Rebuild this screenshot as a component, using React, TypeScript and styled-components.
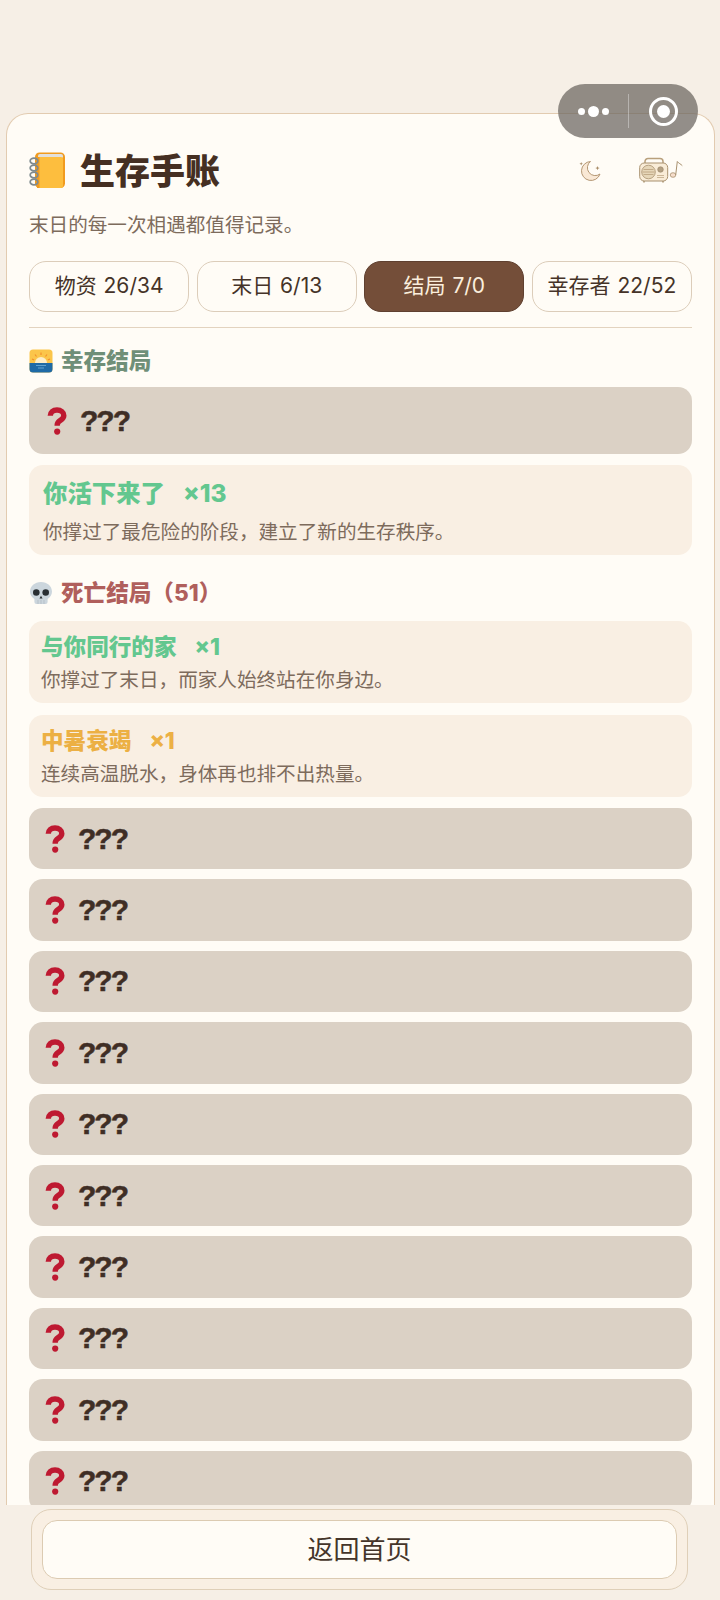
import React from "react";
import styled, { createGlobalStyle } from "styled-components";

const Global = createGlobalStyle`
  html, body { margin: 0; padding: 0; background: #f6efe6; }
  body { font-family: "Inter", "Noto Sans CJK SC", sans-serif; }
`;
const Page = styled.div`
  position: relative;
  width: 720px;
  height: 1600px;
  overflow: hidden;
  display: flex;
  flex-direction: column;
  background: #f6efe6;
`;
const Capsule = styled.div`
  position: absolute;
  left: 558px;
  top: 84px;
  width: 140px;
  height: 54px;
  border-radius: 27px;
  background: rgba(105, 100, 94, 0.72);
  display: flex;
  align-items: center;
`;
const Dots = styled.div`
  width: 70px;
  display: flex;
  justify-content: center;
  align-items: center;
  gap: 3px;
`;
const Dot = styled.i<{ $big?: boolean }>`
  display: block;
  width: ${(p) => (p.$big ? 11 : 7)}px;
  height: ${(p) => (p.$big ? 11 : 7)}px;
  border-radius: 50%;
  background: #fff;
`;
const CapsuleLine = styled.div`
  width: 1px;
  height: 34px;
  background: rgba(255, 255, 255, 0.35);
`;
const Target = styled.div`
  margin-left: 20px;
  width: 29px;
  height: 29px;
  box-sizing: border-box;
  border: 3px solid #fff;
  border-radius: 50%;
  display: flex;
  align-items: center;
  justify-content: center;
  &::after {
    content: "";
    width: 13px;
    height: 13px;
    border-radius: 50%;
    background: #fff;
  }
`;
const Card = styled.main`
  flex: 1;
  min-height: 0;
  overflow: hidden;
  margin: 113px 5px 0 6px;
  padding: 0 22px;
  background: #fffcf6;
  border: 1px solid #e2cbb0;
  border-bottom: none;
  border-radius: 22px 22px 0 0;
`;
const Header = styled.header`
  margin-top: 38px;
  height: 36px;
  display: flex;
  align-items: center;
  justify-content: space-between;
`;
const TitleWrap = styled.div`
  display: flex;
  align-items: center;
  gap: 14px;
`;
const Title = styled.h1`
  margin: 0;
  padding-top: 2px;
  font-size: 35px;
  line-height: 36px;
  font-weight: 900;
  color: #452f22;
`;
const Tools = styled.div`
  display: flex;
  align-items: center;
  gap: 37px;
  padding-right: 9px;
`;
const Sub = styled.p`
  margin: 23px 0 0;
  font-size: 19.6px;
  line-height: 28px;
  color: #7d6b5c;
`;
const Tabs = styled.nav`
  margin-top: 22px;
  display: grid;
  grid-template-columns: repeat(4, 1fr);
  gap: 7.5px;
`;
const Tab = styled.button<{ $active?: boolean }>`
  height: 51px;
  padding: 0 0 5px;
  box-sizing: border-box;
  border-radius: 17px;
  border: 1.5px solid ${(p) => (p.$active ? "#5f4030" : "#dccdba")};
  background: ${(p) => (p.$active ? "#744e39" : "#fffcf6")};
  color: ${(p) => (p.$active ? "#fbeedd" : "#453328")};
  font-family: inherit;
  font-size: 21px;
  word-spacing: 1px;
  white-space: pre;
`;
const Rule = styled.hr`
  margin: 15px 0 0;
  border: none;
  height: 1px;
  background: #e3d3bf;
`;
const Section = styled.h2<{ $color: string; $top: number }>`
  margin: ${(p) => p.$top}px 0 0;
  height: 30px;
  display: flex;
  align-items: center;
  gap: 8px;
  font-size: 22.6px;
  line-height: 30px;
  font-weight: 800;
  color: ${(p) => p.$color};
`;
const List = styled.div<{ $top: number; $gap: number }>`
  margin-top: ${(p) => p.$top}px;
  display: flex;
  flex-direction: column;
  gap: ${(p) => p.$gap}px;
`;
const Locked = styled.div<{ $tall?: boolean }>`
  height: ${(p) => (p.$tall ? 67 : 61.4)}px;
  flex: none;
  box-sizing: border-box;
  padding-left: ${(p) => (p.$tall ? 18 : 16)}px;
  display: flex;
  align-items: center;
  gap: 13px;
  background: #dbd1c5;
  border-radius: 14px;
`;
const Mystery = styled.span`
  font-family: "Liberation Sans", sans-serif;
  font-size: 30px;
  line-height: 32px;
  font-weight: 700;
  letter-spacing: -2px;
  -webkit-text-stroke: 0.5px #3f2e25;
  color: #3f2e25;
`;
const Found = styled.div<{ $large?: boolean }>`
  height: ${(p) => (p.$large ? 90 : 82)}px;
  box-sizing: border-box;
  padding: ${(p) => (p.$large ? "12px 14px" : "10px 12px")};
  background: #f9efe3;
  border-radius: 14px;
`;
const FoundTitle = styled.div<{ $color: string; $large?: boolean }>`
  display: flex;
  gap: 18px;
  font-size: ${(p) => (p.$large ? 24.4 : 22.6)}px;
  line-height: 32px;
  font-weight: 800;
  color: ${(p) => p.$color};
`;
const FoundDesc = styled.div<{ $large?: boolean }>`
  margin-top: ${(p) => (p.$large ? 10 : 4)}px;
  font-size: 19.6px;
  line-height: 26px;
  color: #7d6b5c;
`;
const Footer = styled.footer`
  height: 95px;
  flex: none;
  box-sizing: border-box;
  padding: 4px 32px 10px 31px;
  background: #f6efe6;
`;
const FooterFrame = styled.div`
  height: 81px;
  box-sizing: border-box;
  padding: 10px;
  background: #f9efe3;
  border: 1px solid #dfcfb8;
  border-radius: 20px;
`;
const HomeButton = styled.button`
  width: 100%;
  height: 59px;
  padding: 0 0 4px;
  background: #fffcf6;
  border: 1px solid #dccbb2;
  border-radius: 15px;
  color: #45352a;
  font-family: inherit;
  font-size: 26px;
`;
const Glyph = styled.svg`
  display: block;
  flex: none;
`;

const BookIcon = () => (
  <Glyph width="37" height="37" viewBox="0 0 37 37">
    <rect x="6" y="0.5" width="30" height="35.500" rx="4.500" fill="#f19b1f" />
    <rect x="9" y="2" width="25" height="4.500" rx="2" fill="#e2e0da" />
    <rect x="8" y="5" width="26" height="31" rx="2" fill="#fdbe3e" />
    <rect x="8" y="5" width="2.500" height="31" fill="#f19b1f" />
    {[9, 16, 23, 30].map((y) => (
      <ellipse key={y} cx="5" cy={y} rx="3.800" ry="2.800" fill="none" stroke="#7f8a8f" strokeWidth="1.800" />
    ))}
  </Glyph>
);
const SunIcon = () => (
  <Glyph width="24" height="24" viewBox="0 0 24 24">
    <rect x="0.5" y="0.5" width="23" height="23" rx="3.5" fill="#fbc54a" />
    <path d="M6 14a6 6 0 0 1 12 0z" fill="#fdeec8" />
    <g stroke="#f28d2a" strokeWidth="1.1">
      <path d="M12 3.5v2.5M6 5.5l1.5 2M18 5.5l-1.5 2M3 10l2.2 1M21 10l-2.2 1" />
    </g>
    <path d="M0.5 14h23v6a3.5 3.5 0 0 1-3.5 3.5H4A3.5 3.5 0 0 1 .5 20z" fill="#1e6aa6" />
    <path d="M7 16.5h10M9 19h6" stroke="#5fa1d0" strokeWidth="1" />
  </Glyph>
);
const SkullIcon = () => (
  <Glyph width="24" height="24" viewBox="0 0 24 24">
    <path d="M12 1C5.6 1 1 5.3 1 10.6c0 3.3 1.7 5.8 4.4 7.3V21a2 2 0 0 0 2 2h9.2a2 2 0 0 0 2-2v-3.1c2.7-1.5 4.4-4 4.4-7.3C23 5.3 18.400 1 12 1z" fill="#ccd6dd" />
    <circle cx="7.300" cy="11.500" r="3.300" fill="#292f33" />
    <circle cx="16.700" cy="11.500" r="3.300" fill="#292f33" />
    <path d="M12 14.800l1.500 2.700h-3z" fill="#292f33" />
    <path d="M9 19v4M12 19v4M15 19v4" stroke="#aeb8bf" strokeWidth="0.7" />
  </Glyph>
);
const QuestionIcon = () => (
  <Glyph width="20" height="28" viewBox="0 0 20 28">
    <path d="M3.300 8.800C3.300 5 6 3 10 3s6.800 2.200 6.800 5.400c0 2.600-1.600 3.700-3.300 4.900-1.900 1.300-3.300 2.300-3.300 4.700v.8" fill="none" stroke="#be1931" strokeWidth="5.400" strokeLinecap="butt" />
    <circle cx="10.200" cy="24.600" r="3.100" fill="#be1931" />
  </Glyph>
);
const MoonIcon = () => (
  <Glyph width="23" height="23" viewBox="0 0 23 23">
    <path d="M11.500 2.500A9.500 9.500 0 1 0 21 15 7.500 7.500 0 0 1 11.500 2.500z" fill="#f9e8d5" stroke="#b39673" strokeWidth="1" />
    <path d="M2.200 3l.5 1.300 1.300.5-1.300.5-.5 1.300-.5-1.300L.4 4.800l1.300-.5zM18.500 7l.6 1.500 1.500.6-1.500.6-.6 1.500-.6-1.500-1.500-.6 1.500-.6z" fill="#a98d69" />
  </Glyph>
);
const RadioIcon = () => (
  <Glyph width="44" height="26" viewBox="0 0 44 26">
    <path d="M6 7V4.500A3 3 0 0 1 9 1.500h12a3 3 0 0 1 3 3V7" fill="none" stroke="#b9a07c" strokeWidth="1.500" />
    <rect x="0.700" y="6" width="28" height="18" rx="4.500" fill="#f9ecd7" stroke="#a8906e" />
    <circle cx="9.500" cy="15" r="6.800" fill="#e6d6b8" stroke="#a8906e" strokeWidth="0.800" />
    <path d="M4.500 12.500h10M3.500 15h12M4.500 17.500h10" stroke="#b9a07c" strokeWidth="0.800" />
    <circle cx="21.500" cy="12.500" r="2.800" fill="#b3a083" stroke="#8f7a5d" strokeWidth="0.500" />
    <path d="M18 18.500h7M18 20.500h7" stroke="#b9a07c" strokeWidth="0.700" />
    <path d="M5 24v1.500M24 24v1.500" stroke="#a8906e" strokeWidth="1.500" />
    <ellipse cx="34" cy="18" rx="2.800" ry="2.300" fill="#f6ddcb" stroke="#a8906e" strokeWidth="0.800" />
    <path d="M36.700 18L38.300 4.500c1.500 2 3.500 2.500 5 4.200" fill="none" stroke="#a8906e" strokeWidth="1" />
  </Glyph>
);

const MysteryRow = ({ tall }: { tall?: boolean }) => (
  <Locked $tall={tall}>
    <QuestionIcon />
    <Mystery>???</Mystery>
  </Locked>
);

const App = () => (
  <Page>
    <Global />
    <Card>
      <Header>
        <TitleWrap>
          <BookIcon />
          <Title>生存手账</Title>
        </TitleWrap>
        <Tools>
          <MoonIcon />
          <RadioIcon />
        </Tools>
      </Header>
      <Sub>末日的每一次相遇都值得记录。</Sub>
      <Tabs>
        <Tab>物资 26/34</Tab>
        <Tab>末日 6/13</Tab>
        <Tab $active>结局 7/0</Tab>
        <Tab>幸存者 22/52</Tab>
      </Tabs>
      <Rule />
      <Section $color="#6f8f78" $top={18}>
        <SunIcon />
        幸存结局
      </Section>
      <List $top={11} $gap={11}>
        <MysteryRow tall />
        <Found $large>
          <FoundTitle $color="#63c78f" $large>
            <span>你活下来了</span>
            <span>×13</span>
          </FoundTitle>
          <FoundDesc $large>你撑过了最危险的阶段，建立了新的生存秩序。</FoundDesc>
        </Found>
      </List>
      <Section $color="#b05f5c" $top={23}>
        <SkullIcon />
        死亡结局（51）
      </Section>
      <List $top={13} $gap={12}>
        <Found>
          <FoundTitle $color="#63c78f">
            <span>与你同行的家</span>
            <span>×1</span>
          </FoundTitle>
          <FoundDesc>你撑过了末日，而家人始终站在你身边。</FoundDesc>
        </Found>
        <Found>
          <FoundTitle $color="#ecb044">
            <span>中暑衰竭</span>
            <span>×1</span>
          </FoundTitle>
          <FoundDesc>连续高温脱水，身体再也排不出热量。</FoundDesc>
        </Found>
      </List>
      <List $top={11} $gap={10}>
        {Array.from({ length: 10 }, (_, i) => (
          <MysteryRow key={i} />
        ))}
      </List>
    </Card>
    <Footer>
      <FooterFrame>
        <HomeButton>返回首页</HomeButton>
      </FooterFrame>
    </Footer>
    <Capsule>
      <Dots>
        <Dot />
        <Dot $big />
        <Dot />
      </Dots>
      <CapsuleLine />
      <Target />
    </Capsule>
  </Page>
);

export default App;
